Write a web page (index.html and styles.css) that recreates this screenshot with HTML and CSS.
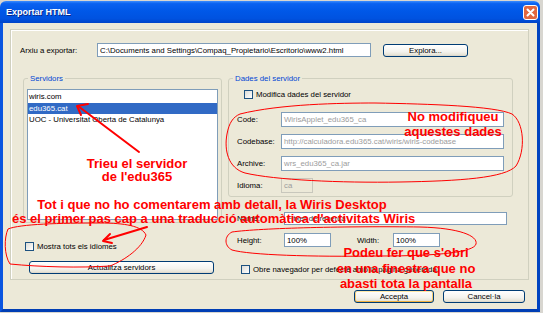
FILE: index.html
```html
<!DOCTYPE html>
<html>
<head>
<meta charset="utf-8">
<link rel="stylesheet" href="styles.css">
</head>
<body>
<div class="window">
  <div class="titlebar">
    <span class="title">Exportar HTML</span>
    <span class="close"><svg width="15" height="15" viewBox="0 0 15 15"><rect x="0.5" y="0.5" width="14" height="14" rx="2.5" fill="#e2673f" stroke="#fff"/><path d="M4.5 4.5 L10.5 10.5 M10.5 4.5 L4.5 10.5" stroke="#fff" stroke-width="2" stroke-linecap="round"/></svg></span>
  </div>
  <div class="client">
    <div class="panel">
      <div class="row-file">
        <span class="lbl-file">Arxiu a exportar:</span>
        <span class="input file-input">C:\Documents and Settings\Compaq_Propietario\Escritorio\www2.html</span>
        <span class="btn explora">Explora...</span>
      </div>
      <div class="cols">
        <div class="col-left">
          <fieldset class="group group-srv">
            <legend>Servidors</legend>
            <div class="listbox">
              <div class="item">wiris.com</div>
              <div class="item selected">edu365.cat</div>
              <div class="item">UOC - Universitat Oberta de Catalunya</div>
            </div>
          </fieldset>
          <div class="check-row check-langs"><span class="cb"></span><span>Mostra tots els idiomes</span></div>
          <span class="btn update">Actualitza servidors</span>
        </div>
        <div class="col-right">
          <fieldset class="group group-data">
            <legend>Dades del servidor</legend>
            <div class="check-row check-mod"><span class="cb"></span><span>Modifica dades del servidor</span></div>
            <div class="fields">
              <span class="flbl">Code:</span><span class="input dis">WirisApplet_edu365_ca</span>
              <span class="flbl">Codebase:</span><span class="input dis">http://calculadora.edu365.cat/wiris/wiris-codebase</span>
              <span class="flbl">Archive:</span><span class="input dis">wrs_edu365_ca.jar</span>
              <span class="flbl">Idioma:</span><span class="input dis gray idioma">ca</span>
            </div>
          </fieldset>
          <div class="name-row">
            <span class="flbl2">Name:</span><span class="input name-input">Fitxer de recerca</span>
          </div>
          <div class="size-row">
            <span class="flbl2">Height:</span><span class="input size-input">100%</span>
            <span class="wlbl">Width:</span><span class="input size-input">100%</span>
          </div>
          <div class="check-row check-open"><span class="cb"></span><span>Obre navegador per defecte amb la pàgina generada</span></div>
        </div>
      </div>
    </div>
    <div class="footer">
      <span class="btn ok">Accepta</span>
      <span class="btn cancel">Cancel·la</span>
    </div>
  </div>
</div>

<div class="overlay">
  <svg class="marks" width="543" height="313" viewBox="0 0 543 313">
    <g fill="none" stroke="#ff0000" stroke-width="1">
      <path d="M240,114 C280,104 340,103 375,103 C430,104 495,106 512,114 C524,122 526,150 516,166 C505,178 460,181 400,182 C340,183 275,180 245,173 C228,168 224,150 227,134 C229,123 233,117 240,114 Z"/>
      <path d="M10,264 C4,255 4,238 8,229 C20,224 60,223 100,223 C125,223 142,226 146,235 C142,248 125,260 110,266 C80,268 40,267 10,264"/>
      <path d="M232,232 C260,228 350,226 420,227 C460,228 478,236 476,244 C474,252 440,256 380,256 C310,257 250,255 232,250 C224,246 224,236 232,232 Z"/>
    </g>
    <g fill="none" stroke="#ff0000" stroke-width="2" stroke-linecap="round" stroke-linejoin="round">
      <path d="M139,152 L78,106"/>
      <path d="M88,104 L77,106 L81,115"/>
      <path d="M147,227 L104,240"/>
      <path d="M112,243 L103,241 L110,234"/>
    </g>
  </svg>
  <div class="note note-trieu">Trieu el servidor<br>de l'edu365</div>
  <div class="note note-nomod">No modifiqueu<br>aquestes dades</div>
  <div class="note note-tot">Tot i que no ho comentarem amb detall, la Wiris Desktop<br>és el primer pas cap a una traducció automàtica d'activitats Wiris</div>
  <div class="note note-podeu">Podeu fer que s'obri<br>en una finestra que no<br>abasti tota la pantalla</div>
</div>
</body>
</html>
```

FILE: styles.css
```css
* { box-sizing: border-box; }
html, body { margin: 0; padding: 0; }
body {
  width: 543px; height: 313px; overflow: hidden;
  background: #d8d6d0;
  font-family: "Liberation Sans", Arial, sans-serif;
  font-size: 7.8px;
  color: #000;
  position: relative;
}
.window {
  margin-top: 1px;
  width: 540px; height: 311px;
  display: flex; flex-direction: column;
}
.titlebar {
  height: 22px;
  border-radius: 6px 6px 0 0;
  background: linear-gradient(#3a8cff 0, #0a62f0 12%, #0058e8 45%, #0052e0 80%, #0044c8 100%);
  display: flex; align-items: center; justify-content: space-between;
  padding: 0 2px 0 6px;
}
.title { color: #fff; font-weight: bold; font-size: 9px; text-shadow: 1px 1px 0 #0a2a8a; }
.close { display: flex; }
.client {
  flex: 1;
  background: #ece9d8;
  border: 3px solid #0a4fd8; border-top: none;
  border-color: #0a4fd8 #0043c0 #003eb4 #0a55e0;
  padding-top: 6px;
  display: flex; flex-direction: column;
}
.panel {
  margin-left: 7px;
  width: 519px; height: 251px;
  border: 1px solid #d0d0bf;
  box-shadow: inset 1px 1px 0 #fff;
}
.input {
  display: flex; align-items: center;
  background: #fff;
  border: 1px solid #7f9db9;
  padding: 0 2px;
  white-space: nowrap; overflow: hidden;
}
.row-file { display: flex; align-items: center; margin-top: 13px; padding-left: 9px; }
.lbl-file { width: 77px; }
.file-input { width: 274px; height: 14px; }
.btn {
  display: flex; align-items: center; justify-content: center;
  border: 1px solid #003c74; border-radius: 3px;
  background: linear-gradient(#ffffff, #f4f3ee 60%, #e6e3d6 90%, #d6d0c5);
  white-space: nowrap;
}
.explora { margin-left: 12px; width: 85px; height: 13px; }
.cols { display: flex; margin-top: 17px; padding-left: 12px; }
.col-left { width: 199px; display: flex; flex-direction: column; }
.col-right { width: 285px; margin-left: 6px; display: flex; flex-direction: column; }
.group {
  margin: 0; min-width: 0;
  border: 1px solid #d0d0bf; border-radius: 3px;
  padding: 0 3px 2px 3px;
}
.group legend {
  color: #0046d5;
  padding: 0 2px;
  margin-left: 1px;
  line-height: 9px;
}
.listbox {
  margin-top: 6px; height: 131px;
  background: #fff; border: 1px solid #7f9db9;
  padding-top: 1px;
}
.item { height: 11.5px; line-height: 11.5px; padding-left: 1px; }
.item.selected { background: #316ac5; color: #fff; }
.check-row { display: flex; align-items: center; height: 10px; }
.cb {
  width: 9px; height: 9px; flex: none;
  border: 1px solid #1c5180;
  background: linear-gradient(135deg, #dcdcd7, #fff);
  margin-right: 3px;
}
.check-langs { margin-top: 18px; padding-left: 2px; }
.update { margin-top: 10px; margin-left: 6px; width: 185px; height: 13px; }
.check-mod { margin-top: 6px; padding-left: 12px; }
.fields {
  display: grid;
  grid-template-columns: 44px 223px;
  grid-auto-rows: 15px;
  row-gap: 7px;
  align-items: center;
  margin-top: 13px; padding-left: 5px;
  margin-bottom: 1px;
}
.flbl { color: #000; }
.input.dis { color: #9c9c9c; height: 15px; }
.input.gray { background: #ece9d8; border-color: #c8c7bc; }
.idioma { width: 32px; height: 14px; }
.name-row { display: flex; align-items: center; margin-top: 15px; padding-left: 9px; }
.flbl2 { width: 47px; }
.name-input { width: 223px; height: 13px; color: #333; }
.size-row { display: flex; align-items: center; margin-top: 8px; padding-left: 9px; }
.size-input { width: 47px; height: 14px; }
.wlbl { margin-left: 26px; width: 36px; }
.check-open { margin-top: 17px; padding-left: 13px; }
.footer { display: flex; justify-content: flex-end; gap: 9px; margin-top: 10px; padding-right: 12px; }
.ok { width: 80px; height: 13px; box-shadow: inset 0 1px 0 #ffe8a8, inset 0 -1px 0 #f0b040, inset 1px 0 0 #f8cc70, inset -1px 0 0 #f8cc70; }
.cancel { width: 82px; height: 13px; }

.overlay { position: absolute; left: 0; top: 0; width: 543px; height: 313px; pointer-events: none; }
.marks { position: absolute; left: 0; top: 0; }
.note {
  position: absolute;
  color: #ff0000;
  font-family: "Liberation Sans", Arial, sans-serif;
  font-weight: bold;
  font-size: 13px;
  line-height: 14px;
  text-align: center;
  white-space: nowrap;
}
.note-trieu { left: 37px; width: 200px; top: 157px; line-height: 13px; }
.note-nomod { left: 353px; width: 200px; top: 109px; line-height: 15px; }
.note-tot { left: 12px; width: 400px; top: 198px; }
.note-podeu { left: 306px; width: 200px; top: 245px; line-height: 15.5px; }
```
